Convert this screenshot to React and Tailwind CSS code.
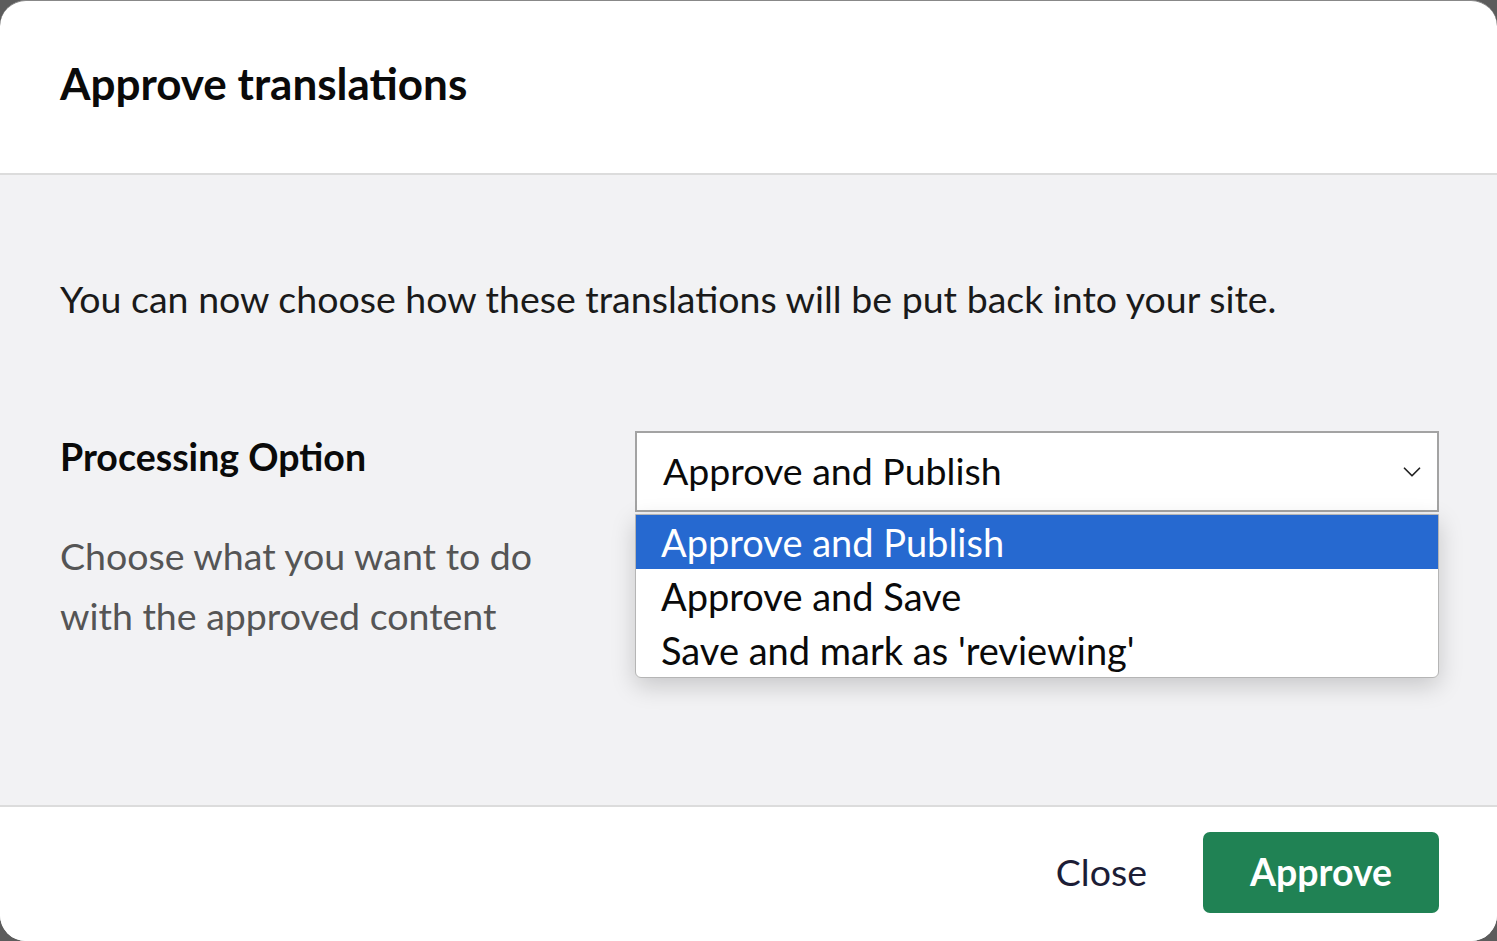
import { ChevronDown } from 'lucide-react';

const options = ['Approve and Publish', 'Approve and Save', "Save and mark as 'reviewing'"];

export default function App() {
  return (
    <div className="h-[941px] w-full bg-[#5c5c5c] overflow-hidden" style={{ fontFamily: 'Lato, "Noto Sans", sans-serif' }}>
      <div className="flex h-full w-full flex-col overflow-hidden rounded-[26px] border-t border-[#888] bg-white">
        <div className="flex h-[174px] shrink-0 items-center border-b-2 border-[#dcdcdc] px-[60px] pb-[8px]">
          <h1 className="text-[44px] font-bold text-[#0a0a0a]">Approve translations</h1>
        </div>

        <div className="flex-1 bg-[#f2f2f4] pl-[60px] pr-[58px] pt-[94px]">
          <p className="text-[37.5px] leading-[60px] text-[#1a1a1a]">
            You can now choose how these translations will be put back into your site.
          </p>

          <div className="mt-[102px] flex">
            <div className="w-[575px] shrink-0">
              <div className="mt-[1px] text-[37.5px] font-bold leading-[50px] text-[#0a0a0a]">Processing Option</div>
              <div className="mt-[44px] text-[37.5px] leading-[60px] text-[#555]">
                Choose what you want to do
                <br />
                with the approved content
              </div>
            </div>

            <div className="relative flex-1">
              <div className="flex h-[81px] items-center justify-between border-2 border-[#a3a3a3] bg-white pl-[26px] pr-[10px]">
                <span className="text-[37.5px] text-[#0a0a0a]">Approve and Publish</span>
                <ChevronDown className="h-[30px] w-[30px] text-[#222]" strokeWidth={1.4} />
              </div>
              <div className="absolute left-0 right-0 top-[83px] z-10 overflow-hidden rounded-b-[6px] border border-[#b5b5b5] bg-white shadow-[0_8px_24px_rgba(0,0,0,0.18)]">
                {options.map((o, i) => (
                  <div
                    key={o}
                    className={`flex h-[54px] items-center px-[25px] text-[38px] ${
                      i === 0 ? 'bg-[#2669d0] text-white' : 'text-[#0a0a0a]'
                    }`}
                  >
                    {o}
                  </div>
                ))}
              </div>
            </div>
          </div>
        </div>

        <div className="flex h-[136px] shrink-0 items-center justify-end gap-[56px] border-t-2 border-[#dcdcdc] bg-white pb-[4px] pr-[58px]">
          <button className="text-[37.5px] text-[#1c1d36]">Close</button>
          <button className="flex h-[81px] w-[236px] items-center justify-center rounded-[7px] bg-[#208254] text-[37.5px] font-bold text-white">
            Approve
          </button>
        </div>
      </div>
    </div>
  );
}
